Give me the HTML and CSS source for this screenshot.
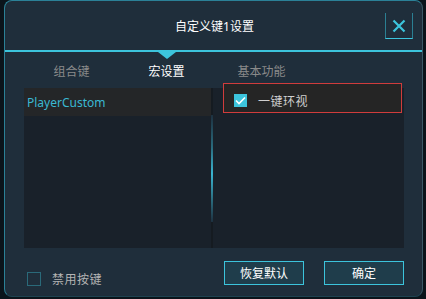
FILE: index.html
```html
<!DOCTYPE html>
<html lang="zh-CN">
  <head>
    <meta charset="UTF-8" />
    <meta name="viewport" content="width=device-width, initial-scale=1.0" />
    <title>自定义键1设置</title>
    <link rel="stylesheet" href="styles.css">
  </head>
  <body>
    <div class="dialog">
      <div class="header">
        <span></span>
        <h2 class="title">自定义键1设置</h2>
        <button class="close" aria-label="关闭">
          <svg width="14" height="14" viewBox="0 0 14 14">
            <path d="M1.5 1.5 L12.5 12.5 M12.5 1.5 L1.5 12.5" stroke="#3cc4dc" stroke-width="2.2" fill="none" />
          </svg>
        </button>
      </div>

      <div class="tabs">
        <div class="tab">组合键</div>
        <div class="tab active">宏设置</div>
        <div class="tab">基本功能</div>
      </div>

      <div class="panel">
        <div class="macro-list">
          <div class="macro-item selected">PlayerCustom</div>
        </div>
        <div class="scrollbar"><div class="thumb"></div></div>
        <div class="func-list">
          <label class="func-item focused">
            <span class="check checked">
              <svg width="11" height="9" viewBox="0 0 11 9">
                <path d="M1 4.5 L4 7.5 L10 1.5" stroke="#ffffff" stroke-width="1.6" fill="none" />
              </svg>
            </span>
            <span>一键环视</span>
          </label>
        </div>
      </div>

      <div class="footer">
        <label class="disable">
          <span class="check"></span>
          <span>禁用按键</span>
        </label>
        <div class="actions">
          <button class="btn">恢复默认</button>
          <button class="btn">确定</button>
        </div>
      </div>
    </div>
  </body>
</html>
```

FILE: styles.css
```css
:root {
  --cyan: #3cc4dc;
  --dialog-bg: #1f2e3b;
  --panel-bg: #19212a;
  --row-bg: #242628;
}

body {
  margin: 0;
  background: #0b141b;
  font-family: "Noto Sans", "Noto Sans CJK SC", sans-serif;
  font-size: 12px;
}

.dialog {
  box-sizing: border-box;
  width: 419px;
  height: 297px;
  margin-left: 4px;
  background: var(--dialog-bg);
  border: 1px solid #2b8197;
  border-bottom-color: #1f4350;
  border-right-color: #3a5866;
  border-radius: 8px;
  display: flex;
  flex-direction: column;
}

.header {
  height: 49px;
  border-bottom: 2px solid var(--cyan);
  display: grid;
  grid-template-columns: 1fr auto 1fr;
  align-items: center;
}

.title {
  margin: 0;
  font-size: 12px;
  font-weight: normal;
  color: #ffffff;
  padding-left: 2px;
}

.close {
  justify-self: end;
  margin-right: 9px;
  margin-top: 1px;
  width: 28px;
  height: 26px;
  padding: 0;
  background: transparent;
  border: 1px solid #2b7f92;
  border-top: none;
  border-bottom-color: var(--cyan);
  display: flex;
  align-items: center;
  justify-content: center;
  cursor: pointer;
}

.tabs {
  height: 36px;
  padding-left: 19px;
  display: flex;
}

.tab {
  position: relative;
  width: 95px;
  text-align: center;
  line-height: 40px;
  color: #8a8a8a;
}

.tab.active {
  color: #ffffff;
}

.tab.active::before {
  content: "";
  position: absolute;
  top: 0;
  left: 50%;
  margin-left: -9px;
  border-left: 9px solid transparent;
  border-right: 9px solid transparent;
  border-top: 7px solid var(--cyan);
}

.panel {
  height: 160px;
  margin: 0 18px 0 19px;
  background: var(--panel-bg);
  display: grid;
  grid-template-columns: 187px 2px 1fr;
}

.macro-item {
  height: 28px;
  line-height: 30px;
  padding-left: 3px;
  color: #3ab8d2;
}

.macro-item.selected {
  background: var(--row-bg);
}

.scrollbar {
  background: #151b21;
}

.thumb {
  margin-top: 27px;
  height: 107px;
  background: linear-gradient(#1d3140, #2a6a7c 30%, #3ab4d0 55%, #2a6a7c 80%, #1d3140);
}

.func-list {
  padding: 0 2px 0 10px;
}

.func-item {
  box-sizing: border-box;
  height: 30px;
  margin-top: -5px;
  padding: 5px 0 0 10px;
  background: #252525;
  border: 1px solid #d03c3c;
  display: flex;
  align-items: center;
  gap: 11px;
  color: #cfcfcf;
  letter-spacing: 0.5px;
}

.check {
  box-sizing: border-box;
  width: 13px;
  height: 13px;
  border: 1px solid #2a6a7a;
  display: inline-flex;
  align-items: center;
  justify-content: center;
}

.check.checked {
  background: var(--cyan);
  border-color: var(--cyan);
}

.footer {
  flex: 1;
  padding: 13px 18px 0 22px;
  display: flex;
  justify-content: space-between;
  align-items: flex-start;
}

.disable {
  margin-top: 9px;
  display: flex;
  align-items: center;
  gap: 11px;
  color: #b4b4b4;
  letter-spacing: 0.5px;
}

.disable .check {
  width: 14px;
  height: 14px;
}

.actions {
  display: flex;
  gap: 20px;
}

.btn {
  width: 80px;
  height: 24px;
  padding: 0;
  background: #1f3d4b;
  border: 1px solid var(--cyan);
  color: #ffffff;
  font-family: inherit;
  font-size: 12px;
  cursor: pointer;
}
```
